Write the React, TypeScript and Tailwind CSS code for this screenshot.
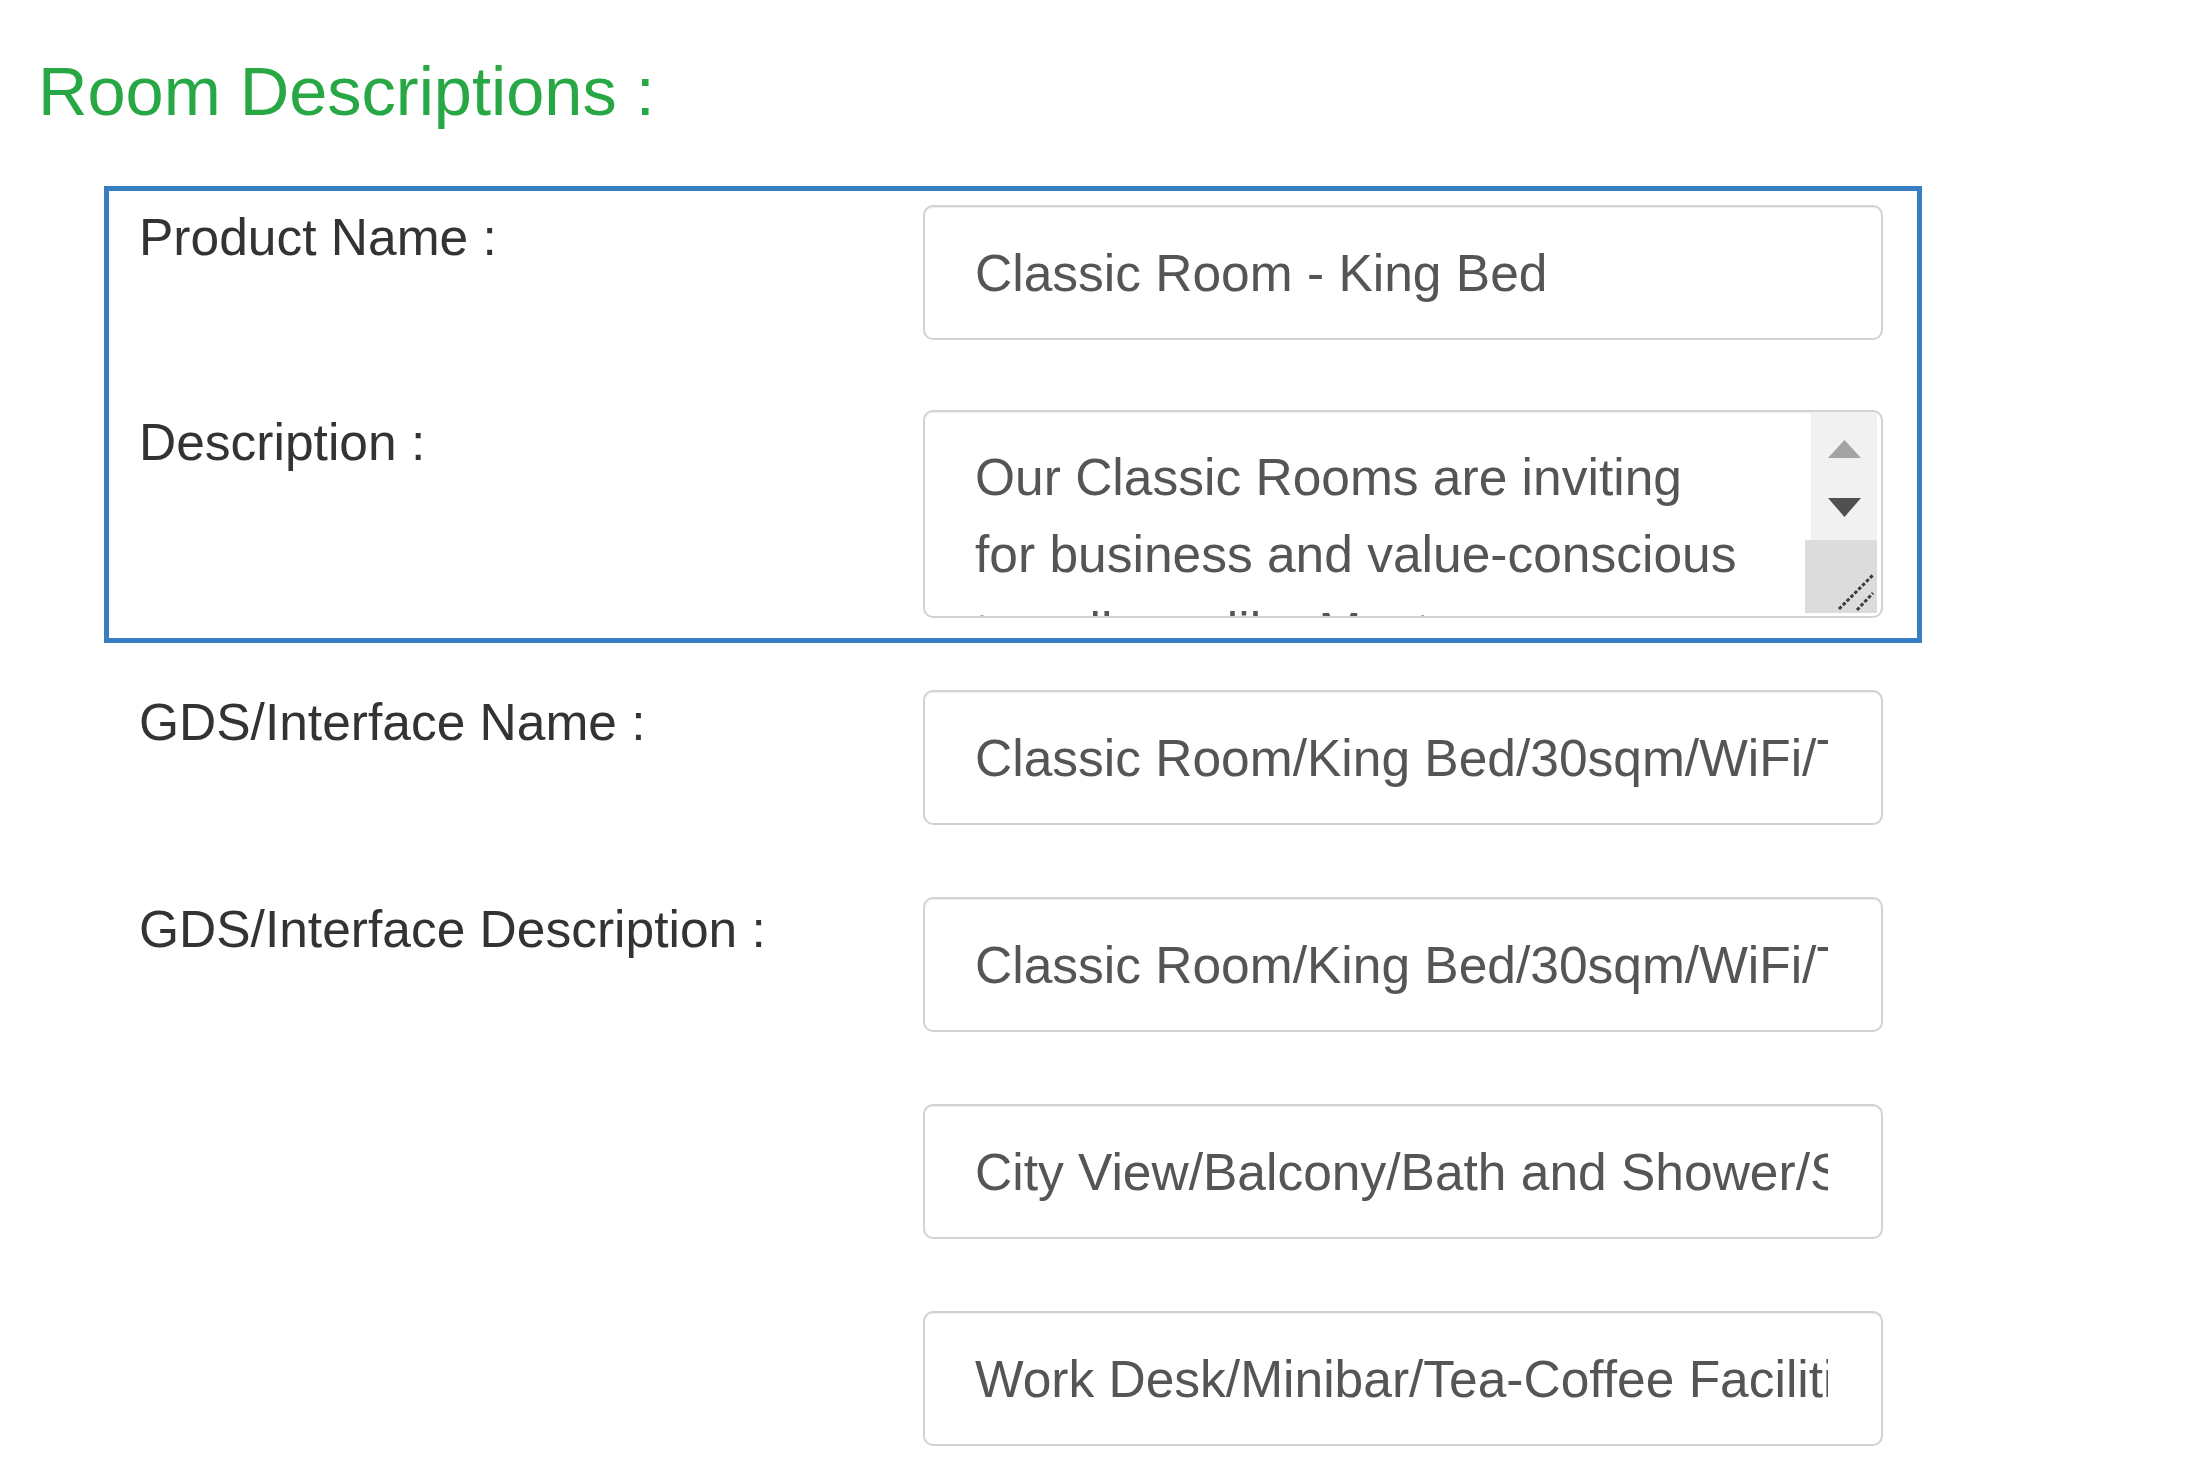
const FONT = "font-['Liberation_Sans',Arial,sans-serif]";

function TextBox({ value }: { value: string }) {
  return (
    <div className="flex h-[135px] w-[960px] items-center rounded-[10px] border-2 border-[#cfd3d8] bg-white pl-[50px] pr-[53px] shadow-[inset_0_1px_1px_rgba(0,0,0,0.075)]">
      <div className="overflow-hidden whitespace-nowrap text-[51.5px] leading-[60px] text-[#555]">{value}</div>
    </div>
  );
}

function TextArea({ value }: { value: string }) {
  return (
    <div className="flex h-[208px] w-[960px] overflow-hidden rounded-[10px] border-2 border-[#cfd3d8] bg-white shadow-[inset_0_1px_1px_rgba(0,0,0,0.075)]">
      {/* text */}
      <div className="flex-1 overflow-hidden pl-[50px] pt-[27px]">
        <div className="w-[770px] text-[51.5px] leading-[77px] text-[#555]">{value}</div>
      </div>
      {/* scrollbar + resize corner */}
      <div className="flex w-[76px] flex-col pb-[3px] pr-[4px]">
        <div className="ml-[6px] flex h-[128px] w-[66px] flex-col items-center gap-[40px] bg-[#f1f1f1] pt-[28px]">
          <svg width="33" height="18" viewBox="0 0 33 18">
            <path d="M16.5 0L33 18H0z" fill="#a3a3a3" />
          </svg>
          <svg width="33" height="19" viewBox="0 0 33 19">
            <path d="M0 0h33L16.5 19z" fill="#505050" />
          </svg>
        </div>
        <div className="h-[73px] w-[72px] bg-[#dcdcdc]">
          <svg width="72" height="73" viewBox="0 0 72 73">
            <path d="M34 69L68 35M52 70L68 53" stroke="#3a3a3a" strokeWidth="3" strokeDasharray="3.5 2" />
          </svg>
        </div>
      </div>
    </div>
  );
}

function Row({ label, children }: { label?: string; children: React.ReactNode }) {
  return (
    <div className="flex">
      <div className="w-[784px] pt-[2px] text-[51.5px] leading-[61px] text-[#333]">{label}</div>
      {children}
    </div>
  );
}

export default function App() {
  return (
    <div className={`min-h-screen bg-white pb-[40px] ${FONT}`}>
      <h1 className="pl-[38px] pt-[51px] text-[68.5px] leading-[82px] font-normal text-[#28a745]">Room Descriptions :</h1>

      {/* highlighted block */}
      <div className="ml-[104px] mt-[53px] flex w-[1818px] flex-col gap-[70px] border-[5px] border-[#377fc2] pb-[20px] pl-[30px] pr-[34px] pt-[14px]">
        <Row label="Product Name :">
          <TextBox value="Classic Room - King Bed" />
        </Row>
        <Row label="Description :">
          <TextArea value="Our Classic Rooms are inviting for business and value-conscious travellers alike Most rooms are on the upper floors with city views." />
        </Row>
      </div>

      <div className="ml-[104px] mt-[42px] flex w-[1818px] flex-col gap-[72px] border-[5px] border-transparent pl-[30px] pr-[34px]">
        <Row label="GDS/Interface Name :">
          <TextBox value="Classic Room/King Bed/30sqm/WiFi/TV/Air Conditioning" />
        </Row>
        <Row label="GDS/Interface Description :">
          <TextBox value="Classic Room/King Bed/30sqm/WiFi/TV/Air Conditioning" />
        </Row>
        <Row>
          <TextBox value="City View/Balcony/Bath and Shower/Safe" />
        </Row>
        <Row>
          <TextBox value="Work Desk/Minibar/Tea-Coffee Facilities" />
        </Row>
      </div>
    </div>
  );
}
